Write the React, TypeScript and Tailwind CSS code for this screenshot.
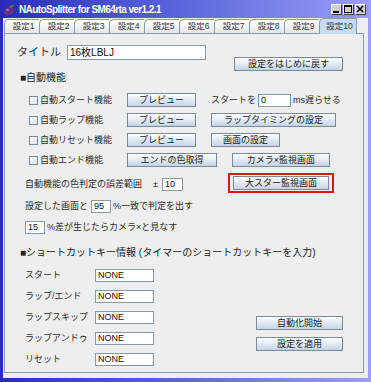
import React from "react";

function Btn({ w, children, className = "" }: { w: string; children: React.ReactNode; className?: string }) {
  return (
    <div
      className={`flex h-[14px] shrink-0 items-center justify-center border border-[#7a8a99] bg-linear-to-b from-[#fdfeff] to-[#c4d4e6] text-[9px] leading-none text-[#222] ${w} ${className}`}
    >
      {children}
    </div>
  );
}

function Field({ w, value, className = "" }: { w: string; value: string; className?: string }) {
  return (
    <div
      className={`flex h-[13px] shrink-0 items-center border border-[#8a98a6] bg-white px-[2px] text-[9px] leading-none text-[#111] ${w} ${className}`}
    >
      {value}
    </div>
  );
}

function Check() {
  return <div className="h-[9px] w-[9px] shrink-0 border border-[#7a8a99] bg-linear-to-br from-white to-[#d6e0ea]" />;
}

function WinBtn({ kind }: { kind: "min" | "max" | "close" }) {
  return (
    <div className="flex h-[11px] w-[11px] items-center justify-center border border-t-white border-l-white border-r-[#404040] border-b-[#404040] bg-[#d4d0c8]">
      <svg width="9" height="9" viewBox="0 0 9 9">
        {kind === "min" && <rect x="1" y="6" width="6" height="2" fill="#000" />}
        {kind === "max" && (
          <>
            <rect x="0.5" y="0.5" width="7" height="7" fill="none" stroke="#000" />
            <rect x="0.5" y="0.5" width="7" height="1.5" fill="#000" />
          </>
        )}
        {kind === "close" && (
          <path d="M1 1 L7 7 M7 1 L1 7" stroke="#000" strokeWidth="1.6" />
        )}
      </svg>
    </div>
  );
}

const tabs = ["設定1", "設定2", "設定3", "設定4", "設定5", "設定6", "設定7", "設定8", "設定9"];

export default function App() {
  return (
    <div className="flex h-[382px] w-[371px] flex-col bg-linear-to-r from-[#2a2abc] to-[#9c9cfa] font-['Liberation_Sans','Noto_Sans_CJK_JP',sans-serif] text-[#2b2b2b]">
      {/* title bar */}
      <div className="flex h-[18px] shrink-0 items-center pl-[3px] pr-[5px]">
        <svg width="13" height="13" viewBox="0 0 13 13">
          <ellipse cx="6" cy="8" rx="5.2" ry="4" transform="rotate(-20 6 8)" fill="#6b2f86" />
          <ellipse cx="4.5" cy="7" rx="1.6" ry="1" fill="#a877c0" />
          <path d="M6 4 Q8 1.5 11 2 Q10 4 8 5 Z" fill="#3f8f2f" />
          <path d="M9 2.5 L11.5 0.5" stroke="#2f6f1f" strokeWidth="1" />
        </svg>
        <span className="ml-[3px] text-[10px] font-bold tracking-[-0.6px] text-white">
          NAutoSplitter for SM64rta ver1.2.1
        </span>
        <div className="ml-auto flex gap-[1px]">
          <WinBtn kind="min" />
          <WinBtn kind="max" />
          <WinBtn kind="close" />
        </div>
      </div>

      <div className="mx-[3px] mb-[4px] flex flex-1 flex-col bg-[#eeeeee] pb-[5px] pl-[1px] pr-[4px]">
        {/* tabs */}
        <div className="flex h-[15px] shrink-0 items-end">
          {tabs.map((t) => (
            <div
              key={t}
              className="flex h-[14px] w-[35px] items-center justify-center rounded-tl-[5px] border-t border-l border-[#8a99a6] bg-linear-to-b from-white to-[#e6e6e6] pl-[3px] text-[8.5px] leading-none text-[#333]"
            >
              {t}
            </div>
          ))}
          <div className="relative z-10 -mb-[1px] flex h-[16px] w-[38px] items-center justify-center rounded-tl-[5px] border-x border-t border-[#8a99a6] bg-[#c8dcf0] pl-[3px] text-[8.5px] leading-none text-[#333]">
            設定10
          </div>
        </div>

        {/* panel */}
        <div className="flex flex-1 flex-col border border-[#8a99a6] bg-[#eeeeee]">
          {/* title row */}
          <div className="mt-[11px] flex items-start pl-[12px]">
            <div className="flex h-[15px] w-[50px] items-center text-[11px] leading-none text-[#333]">タイトル</div>
            <Field w="w-[139px]" value="16枚LBLJ" className="h-[15px] text-[10px]" />
            <Btn w="w-[109px]" className="ml-[28px] mt-[12px]">設定をはじめに戻す</Btn>
          </div>

          {/* auto section */}
          <div className="flex h-[14px] items-center pl-[15px] text-[10px] leading-none text-[#222]">■自動機能</div>

          <div className="mt-[5px] flex h-[20px] items-center pl-[24px]">
            <Check />
            <span className="ml-[2px] w-[87px] text-[9px] leading-none">自動スタート機能</span>
            <Btn w="w-[69px]">プレビュー</Btn>
            <span className="ml-[15px] w-[47px] text-[9px] leading-none">スタートを</span>
            <Field w="w-[33px]" value="0" />
            <span className="ml-[2px] text-[9px] leading-none">ms遅らせる</span>
          </div>

          <div className="flex h-[20px] items-center pl-[24px]">
            <Check />
            <span className="ml-[2px] w-[87px] text-[9px] leading-none">自動ラップ機能</span>
            <Btn w="w-[69px]">プレビュー</Btn>
            <Btn w="w-[125px]" className="ml-[15px]">ラップタイミングの設定</Btn>
          </div>

          <div className="flex h-[20px] items-center pl-[24px]">
            <Check />
            <span className="ml-[2px] w-[87px] text-[9px] leading-none">自動リセット機能</span>
            <Btn w="w-[69px]">プレビュー</Btn>
            <Btn w="w-[69px]" className="ml-[15px]">画面の設定</Btn>
          </div>

          <div className="flex h-[20px] items-center pl-[24px]">
            <Check />
            <span className="ml-[2px] w-[87px] text-[9px] leading-none">自動エンド機能</span>
            <Btn w="w-[90px]">エンドの色取得</Btn>
            <Btn w="w-[98px]" className="ml-[15px]">カメラ×監視画面</Btn>
          </div>

          <div className="mt-[3px] flex h-[20px] items-start pl-[20px]">
            <div className="mt-[5px] flex h-[13px] items-center">
              <span className="w-[128px] text-[9px] leading-none">自動機能の色判定の誤差範囲</span>
              <span className="w-[9px] text-[9px] leading-none">±</span>
              <Field w="w-[21px]" value="10" />
            </div>
            <div className="ml-[45px] flex h-[20px] w-[106px] items-center justify-center border-2 border-[#e01515]">
              <Btn w="w-[96px]">大スター監視画面</Btn>
            </div>
          </div>

          <div className="mt-[3px] flex h-[21px] items-center pl-[20px]">
            <span className="w-[66px] text-[9px] leading-none">設定した画面と</span>
            <Field w="w-[20px]" value="95" />
            <span className="ml-[2px] text-[9px] leading-none">%一致で判定を出す</span>
          </div>

          <div className="flex h-[21px] items-center pl-[20px]">
            <Field w="w-[20px]" value="15" />
            <span className="ml-[2px] text-[9px] leading-none">%差が生じたらカメラ×と見なす</span>
          </div>

          {/* shortcut section */}
          <div className="mt-[8px] flex h-[14px] items-center pl-[15px] text-[10px] leading-none text-[#222]">
            ■ショートカットキー情報 (タイマーのショートカットキーを入力)
          </div>

          <div className="mt-[5px] flex items-start">
            <div className="flex flex-col pl-[20px]">
              {[
                ["スタート", "NONE"],
                ["ラップ/エンド", "NONE"],
                ["ラップスキップ", "NONE"],
                ["ラップアンドゥ", "NONE"],
                ["リセット", "NONE"],
              ].map(([label, v]) => (
                <div key={label} className="flex h-[21px] items-center">
                  <span className="w-[70px] text-[9px] leading-none">{label}</span>
                  <Field w="w-[59px]" value={v} />
                </div>
              ))}
            </div>
            <div className="ml-[102px] mt-[51px] flex flex-col gap-[7px]">
              <Btn w="w-[87px]">自動化開始</Btn>
              <Btn w="w-[87px]">設定を適用</Btn>
            </div>
          </div>
        </div>
      </div>
    </div>
  );
}
